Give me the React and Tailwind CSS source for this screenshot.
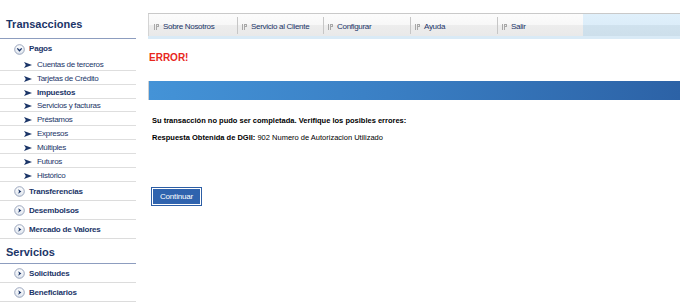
import React from "react";

const NAVY = "text-[#1b3568]";

function CircleIcon({ down }) {
  return (
    <svg width="11" height="11" viewBox="0 0 11 11" className="shrink-0">
      <defs>
        <linearGradient id={down ? "cgd" : "cgr"} x1="0" y1="0" x2="0" y2="1">
          <stop offset="0" stopColor="#ffffff" />
          <stop offset="1" stopColor="#dfe5ee" />
        </linearGradient>
      </defs>
      <circle cx="5.5" cy="5.5" r="4.8" fill={`url(#${down ? "cgd" : "cgr"})`} stroke="#8f9cb6" strokeWidth="0.9" />
      {down ? (
        <path d="M3.3 4.4 L5.5 6.8 L7.7 4.4" fill="none" stroke="#1b3568" strokeWidth="1.3" />
      ) : (
        <path d="M4.2 3.2 L7.4 5.5 L4.2 7.8 L5 5.5 Z" fill="#1b3568" />
      )}
    </svg>
  );
}

function Arrow() {
  return (
    <svg width="8" height="6" viewBox="0 0 8 6" className="shrink-0">
      <path d="M0 0 L8 3 L0 6 L1.8 3 Z" fill="#1b3568" />
    </svg>
  );
}

function NavIcon() {
  return (
    <svg width="5" height="6" viewBox="0 0 5 6" className="shrink-0">
      <rect x="0" y="0" width="1" height="6" fill="#a8a8a8" />
      <rect x="2" y="0" width="3" height="1" fill="#a8a8a8" />
      <rect x="2" y="2" width="3" height="1" fill="#a8a8a8" />
      <rect x="2" y="0" width="1" height="6" fill="#a8a8a8" />
      <rect x="4" y="0" width="1" height="3" fill="#a8a8a8" />
    </svg>
  );
}

const subs = [
  { t: "Cuentas de terceros" },
  { t: "Tarjetas de Crédito" },
  { t: "Impuestos", b: true },
  { t: "Servicios y facturas" },
  { t: "Préstamos" },
  { t: "Expresos" },
  { t: "Múltiples" },
  { t: "Futuros" },
  { t: "Histórico" },
];

const navItems = [
  { t: "Sobre Nosotros", w: "w-[89px]" },
  { t: "Servicio al Cliente", w: "w-[86px]" },
  { t: "Configurar", w: "w-[87px]" },
  { t: "Ayuda", w: "w-[87px]" },
  { t: "Salir", w: "w-[86px]" },
];

function MainItem({ t }) {
  return (
    <div className="flex h-[19px] items-center border-b border-[#dcdcdc] pl-[14px] pt-[2px]">
      <CircleIcon />
      <span className={`ml-[4px] text-[8px] font-bold tracking-[-0.2px] ${NAVY}`}>{t}</span>
    </div>
  );
}

export default function App() {
  return (
    <div
      className="flex h-[302px] w-[680px] overflow-hidden bg-white"
      style={{ fontFamily: "'Liberation Sans', Arial, sans-serif" }}
    >
      {/* Sidebar */}
      <div className="flex w-[136px] shrink-0 flex-col">
        <div className="flex h-[39px] items-end border-b border-[#8d9dbf] pb-[7px] pl-[6px]">
          <span className={`text-[11px] font-bold leading-[14px] ${NAVY}`}>Transacciones</span>
        </div>
        <div className="flex h-[18px] items-center pl-[14px] pt-[2px]">
          <CircleIcon down />
          <span className={`ml-[4px] text-[8px] font-bold tracking-[-0.2px] ${NAVY}`}>Pagos</span>
        </div>
        <div className="flex flex-col">
          {subs.map((s) => (
            <div
              key={s.t}
              className="flex h-[13.85px] items-center border-b border-[#dedede] pl-[24px] pt-[3px]"
            >
              <Arrow />
              <span
                className={`ml-[5px] text-[8px] leading-[10px] ${s.b ? "font-bold tracking-[-0.2px]" : "tracking-[-0.3px]"} ${NAVY}`}
              >
                {s.t}
              </span>
            </div>
          ))}
        </div>
        <MainItem t="Transferencias" />
        <MainItem t="Desembolsos" />
        <MainItem t="Mercado de Valores" />
        <div className="flex h-[25.2px] items-end border-b border-[#8d9dbf] pb-[4px] pl-[6px]">
          <span className={`text-[11px] font-bold leading-[14px] ${NAVY}`}>Servicios</span>
        </div>
        <MainItem t="Solicitudes" />
        <MainItem t="Beneficiarios" />
      </div>

      {/* Main */}
      <div className="ml-[12px] flex min-w-0 flex-1 flex-col">
        <div className="mt-[13px] flex flex-col border-t border-[#c9c9c9]">
          <div className="flex h-[22px]">
            {navItems.map((n, i) => (
              <div
                key={n.t}
                className={`flex ${n.w} items-center bg-[linear-gradient(#fcfcfc_0%,#f7f7f7_50%,#ededed_50%,#e9e9e9_100%)] ${i === 0 ? "border-l border-[#d4d4d4]" : ""}`}
              >
                {i > 0 && <div className="h-[17px] w-px bg-[#c6c6c6]" />}
                <div className={`flex items-center pt-[3px] ${i === 0 ? "pl-[5px]" : "pl-[4px]"}`}>
                  <NavIcon />
                  <span className={`ml-[4px] text-[8px] tracking-[-0.3px] ${NAVY}`}>{n.t}</span>
                </div>
              </div>
            ))}
            <div className="flex-1 bg-[linear-gradient(#e0f0fb_0%,#dcedf9_50%,#d0e2ee_50%,#cddfeb_100%)]" />
          </div>
          <div className="h-[3px] bg-[#d9eaf6]" />
        </div>

        <div className="mt-[13px] pl-[1px] text-[10px] font-bold leading-[12px] text-[#e8271d]">ERROR!</div>

        <div className="mt-[17px] h-[19px] border-l border-[#d0d0d0] bg-[linear-gradient(90deg,#4493d7_0%,#3a7fc4_45%,#2c62a6_100%)]" />

        <div className="mt-[16px] pl-[4px] text-[7.5px] font-bold leading-[10px] text-black">
          Su transacción no pudo ser completada. Verifique los posibles errores:
        </div>
        <div className="mt-[7px] pl-[4px] text-[7.5px] leading-[10px] text-black">
          <span className="font-bold">Respuesta Obtenida de DGII:</span> 902 Numero de Autorizacion Utilizado
        </div>

        <div className="mt-[44px] pl-[3px]">
          <div className="flex h-[19px] w-[51px] border border-[#2d5ea5] bg-white p-px">
            <div className="flex flex-1 items-center justify-center bg-[#2f63ae] text-[8px] tracking-[-0.2px] text-white">
              Continuar
            </div>
          </div>
        </div>
      </div>
    </div>
  );
}
